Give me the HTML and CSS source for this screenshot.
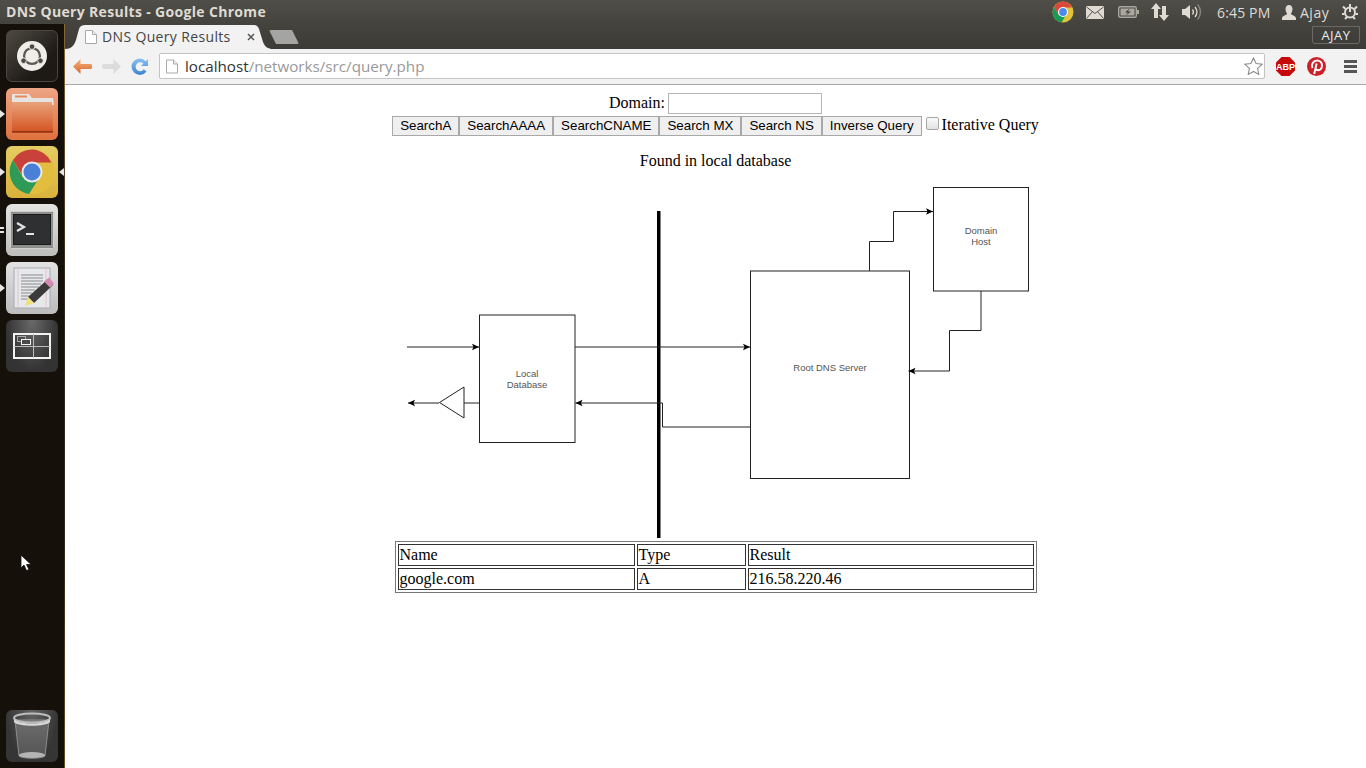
FILE: index.html
```html
<!DOCTYPE html>
<html lang="en">
<head>
<meta charset="utf-8">
<title>DNS Query Results</title>
<link rel="stylesheet" href="styles.css">
</head>
<body>
<div class="desktop">
  <header class="panel">
    <span class="panel-title">DNS Query Results - Google Chrome</span>
    <div class="tray">
      <svg class="tray-chrome" width="22" height="22" viewBox="0 0 22 22">
        <circle cx="11" cy="11" r="10.500" fill="#e2c13c"/>
        <path d="M11 .5A10.500 10.500 0 0 0 2 6l4.500 8L11 6.500h9A10.500 10.500 0 0 0 11 .5z" fill="#d9483b"/>
        <path d="M2 6A10.500 10.500 0 0 0 9.500 21.400l4.300-7.400-7.300 0z" fill="#0f9d58"/>
        <circle cx="11" cy="11" r="5" fill="#fff"/><circle cx="11" cy="11" r="3.900" fill="#4a8af0"/>
      </svg>
      <svg class="tray-mail" width="18" height="13" viewBox="0 0 18 13">
        <rect width="18" height="13" rx="1" fill="#dfdbd2"/>
        <path d="M.5 1 9 7.500 17.500 1M.5 12.500 6.500 5.500M17.500 12.500 11.500 5.500" fill="none" stroke="#55534d" stroke-width="1"/>
      </svg>
      <svg class="tray-batt" width="21" height="12" viewBox="0 0 21 12">
        <rect x=".7" y=".7" width="17.600" height="10.600" rx="1.500" fill="none" stroke="#aaa79f" stroke-width="1.400"/>
        <rect x="2.500" y="2.500" width="14" height="7" fill="#aaa79f"/>
        <rect x="19" y="4" width="2" height="4" fill="#aaa79f"/>
        <path d="M11.500 2.500 7 6.500h3L8 9.500l5-4h-3z" fill="#3f3e39"/>
      </svg>
      <svg class="tray-net" width="18" height="20" viewBox="0 0 18 20">
        <path d="M5 1 0 7h3v9h4V7h3zM13 19l5-6h-3V4h-4v9H8z" fill="#dfdbd2"/>
      </svg>
      <svg class="tray-vol" width="20" height="18" viewBox="0 0 20 18">
        <path d="M0 6h3l5-4v14l-5-4H0z" fill="#dfdbd2"/>
        <path d="M10.500 6.500a4 4 0 0 1 0 5M13 4a7.500 7.500 0 0 1 0 10" fill="none" stroke="#dfdbd2" stroke-width="1.300"/>
        <path d="M15.500 1.500a11 11 0 0 1 0 15" fill="none" stroke="#8b8983" stroke-width="1.300"/>
      </svg>
      <span class="tray-time">6:45 PM</span>
      <svg class="tray-user" width="14" height="15" viewBox="0 0 14 15">
        <path d="M7 0c2.200 0 3.500 1.700 3.500 4S9.300 8 9 9c1 1.500 5 1.800 5 4.500V15H0v-1.500C0 10.800 4 10.500 5 9 4.700 8 3.500 6.300 3.500 4S4.800 0 7 0z" fill="#dfdbd2"/>
      </svg>
      <span class="tray-name">Ajay</span>
      <svg class="tray-gear" width="16" height="16" viewBox="0 0 16 16">
        <circle cx="8" cy="8.500" r="5" fill="none" stroke="#dfdbd2" stroke-width="2"/>
        <path d="M8 0v8M1 2.500l2.500 2.500M15 2.500 12.500 5M0 10h2.500M16 10h-2.500M3 15l2-2M13 15l-2-2" stroke="#dfdbd2" stroke-width="2" fill="none"/>
      </svg>
    </div>
  </header>

  <div class="workspace">
    <aside class="launcher">
      <div class="tile tile-bfb">
        <svg width="30" height="30" viewBox="0 0 32 32">
          <circle cx="16" cy="16" r="16" fill="#efedea"/>
          <circle cx="16" cy="16" r="8.500" fill="none" stroke="#5b5750" stroke-width="2.400"/>
          <circle cx="16" cy="6" r="3" fill="#4a4640" stroke="#efedea"/>
          <circle cx="7" cy="21" r="3" fill="#4a4640" stroke="#efedea"/>
          <circle cx="25" cy="21" r="3" fill="#4a4640" stroke="#efedea"/>
        </svg>
      </div>
      <div class="tile tile-files">
        <span class="pip pip-left"></span>
        <svg width="46" height="42" viewBox="0 0 46 42">
          <defs><linearGradient id="folder" x1="0" y1="0" x2="0" y2="1"><stop offset="0" stop-color="#e8a27a"/><stop offset="1" stop-color="#d4511f"/></linearGradient></defs>
          <path d="M3 1h17l3 4h21l1 7H3z" fill="#e6e4e1"/>
          <rect x="6" y="2.500" width="12" height="2" fill="#e88a5c"/>
          <path d="M3 9h40l1 29a2 2 0 0 1-2 2H5a2 2 0 0 1-2-2z" fill="url(#folder)"/>
          <rect x="3" y="38" width="41" height="1.500" fill="#8e3413"/>
        </svg>
      </div>
      <div class="tile tile-chrome">
        <span class="pip pip-left"></span>
        <span class="pip pip-right"></span>
        <svg width="46" height="46" viewBox="0 0 46 46">
          <circle cx="23" cy="23" r="22.500" fill="#e3bd3e"/>
          <path d="M23 .5A22.500 22.500 0 0 0 4 11l9.500 16L23 13.500h19.500A22.500 22.500 0 0 0 23 .5z" fill="#c8413a"/>
          <path d="M4 11A22.500 22.500 0 0 0 20 45l9.500-15-16-2z" fill="#2e9a58"/>
          <circle cx="23" cy="23" r="10.500" fill="#e8e8ea"/>
          <circle cx="23" cy="23" r="8.500" fill="#4a80d8"/>
        </svg>
      </div>
      <div class="tile tile-term">
        <span class="pip pip-double"></span>
        <svg width="44" height="38" viewBox="0 0 44 38">
          <rect x=".5" y=".5" width="43" height="37" rx="1" fill="#8f908d" stroke="#d0d0ce"/>
          <rect x="3.500" y="3.500" width="37" height="30" fill="#2f3031" stroke="#191a1b"/>
          <path d="M7 12l7 4-7 4" fill="none" stroke="#e4e4e4" stroke-width="2.200"/>
          <rect x="16" y="22" width="8" height="2" fill="#e4e4e4"/>
        </svg>
      </div>
      <div class="tile tile-edit">
        <span class="pip pip-left"></span>
        <svg width="46" height="46" viewBox="0 0 46 46">
          <rect x="5" y="3" width="36" height="40" fill="#e6e8ec" stroke="#a8aaad"/>
          <path d="M9 3v40M37 3v40" stroke="#e0b8bc" stroke-width=".8"/>
          <path d="M12 10h22M12 13h22M12 16h22M12 19h20M12 22h18M12 25h14M12 28h11M12 31h9M12 34h7" stroke="#8a8a8a" stroke-width="1"/>
          <path d="M39 14l5 6-19 18-6-6z" fill="#3a3a3a"/>
          <path d="M40 12.500l5 6-4 4-6-6z" fill="#d48cb4"/>
          <path d="M19 32l6 6-9 3z" fill="#efe07c"/>
        </svg>
      </div>
      <div class="tile tile-switch">
        <svg width="38" height="26" viewBox="0 0 38 26">
          <rect x="1" y="1" width="36" height="24" fill="none" stroke="#f2f2f2" stroke-width="2"/>
          <path d="M1 13.500h36M20.500 1v24" stroke="#bcbcbc" stroke-width="1"/>
          <rect x="4.500" y="3.500" width="8" height="5" fill="none" stroke="#a8a8a8"/>
          <rect x="8.500" y="6.500" width="9" height="5" fill="#4a4a4a" stroke="#f2f2f2"/>
        </svg>
      </div>
      <div class="tile tile-trash">
        <svg width="38" height="48" viewBox="0 0 38 48">
          <defs><linearGradient id="bin" x1="0" y1="0" x2="0" y2="1"><stop offset="0" stop-color="#6c6c6c"/><stop offset="1" stop-color="#545454"/></linearGradient></defs>
          <path d="M2 8 6 44c3 3 23 3 26 0L36 8z" fill="url(#bin)" stroke="#8c8c8c"/>
          <ellipse cx="19" cy="43" rx="13" ry="3" fill="#b4b4b4"/>
          <ellipse cx="19" cy="6" rx="18" ry="4.500" fill="none" stroke="#bdbdbd" stroke-width="2"/>
          <path d="M1 7c4 6 32 6 36 0v3c-4 5-32 5-36 0z" fill="#d8d8d8"/>
        </svg>
      </div>
      <svg class="cursor" width="12" height="18" viewBox="0 0 12 18">
        <path d="M1 1v13l3-3 2.500 5.500 2.500-1L6.500 10.500H11z" fill="#fff" stroke="#111" stroke-width=".8"/>
      </svg>
    </aside>

    <div class="browser">
      <div class="tabstrip">
        <div class="tab">
          <svg class="page-icon" width="12" height="14" viewBox="0 0 12 14">
            <path d="M.5.500h7l4 4v9H.5z" fill="#fff" stroke="#a9a9a9"/><path d="M7.500.500v4h4" fill="#eee" stroke="#a9a9a9"/>
          </svg>
          <span class="tab-title">DNS Query Results</span>
          <svg class="tab-close" width="8" height="8" viewBox="0 0 8 8"><path d="M1 1l6 6M7 1 1 7" stroke="#555" stroke-width="1.500"/></svg>
        </div>
        <div class="newtab"></div>
        <div class="profile">AJAY</div>
      </div>
      <div class="toolbar">
        <svg class="nav-back" width="19" height="15" viewBox="0 0 19 15">
          <defs><linearGradient id="orng" x1="0" y1="0" x2="0" y2="1"><stop offset="0" stop-color="#f4b57f"/><stop offset="1" stop-color="#d9662a"/></linearGradient></defs>
          <path d="M7.500 0 0 7.500 7.500 15V10H17a2.500 2.500 0 0 0 0-5H7.500z" fill="url(#orng)"/>
        </svg>
        <svg class="nav-fwd" width="19" height="15" viewBox="0 0 19 15">
          <path d="M11.500 0 19 7.500 11.500 15V10H2a2.500 2.500 0 0 1 0-5h9.500z" fill="#dcdcdc"/>
        </svg>
        <svg class="nav-reload" width="17" height="17" viewBox="0 0 17 17">
          <defs><linearGradient id="blu" x1="0" y1="0" x2="0" y2="1"><stop offset="0" stop-color="#8cc0f2"/><stop offset="1" stop-color="#3d85d0"/></linearGradient></defs>
          <path d="M17 1v7h-7l2.400-2.400A4.500 4.500 0 1 0 12.800 11.300l2.700 2.100A8.200 8.200 0 1 1 14.800 3.200z" fill="url(#blu)"/>
        </svg>
        <div class="omnibox">
          <svg class="page-icon" width="12" height="15" viewBox="0 0 12 14">
            <path d="M.5.500h7l4 4v9H.5z" fill="#fff" stroke="#a9a9a9"/><path d="M7.500.500v4h4" fill="#eee" stroke="#a9a9a9"/>
          </svg>
          <span class="url"><span class="url-host">localhost</span>/networks/src/query.php</span>
          <svg class="star" width="19" height="18" viewBox="0 0 19 18">
            <path d="M9.500 1l2.600 5.600 6 .7-4.500 4.100 1.200 6-5.300-3-5.300 3 1.200-6L.9 7.300l6-.7z" fill="#fff" stroke="#8c8c8c" stroke-width="1.100"/>
          </svg>
        </div>
        <svg class="ext-abp" width="19" height="19" viewBox="0 0 19 19">
          <path d="M5.500 0h8L19 5.500v8L13.500 19h-8L0 13.500v-8z" fill="#c60a0a"/>
          <text class="abp-text" x="9.500" y="13">ABP</text>
        </svg>
        <svg class="ext-pin" width="19" height="19" viewBox="0 0 19 19">
          <circle cx="9.500" cy="9.500" r="9.500" fill="#cb2027"/>
          <path d="M5.500 11C3.800 7.500 6.300 3.500 10 3.500c3 0 5 2 5 4.800 0 3-1.800 5-3.900 5-1.100 0-1.900-.6-2.200-1.400M9.600 6.500 7.200 17" fill="none" stroke="#fff" stroke-width="2"/>
        </svg>
        <svg class="menu-icon" width="13" height="13" viewBox="0 0 13 13">
          <path d="M0 0h13v3H0zM0 5h13v3H0zM0 10h13v3H0z" fill="#555"/>
        </svg>
      </div>

      <main class="page">
        <form class="query-form">
          <div class="domain-line">
            <label class="domain-label" for="domain">Domain:</label>
            <input id="domain" class="domain-input" type="text">
          </div>
          <div class="button-line"><button type="button">SearchA</button><button type="button">SearchAAAA</button><button type="button">SearchCNAME</button><button type="button">Search MX</button><button type="button">Search NS</button><button type="button">Inverse Query</button><input id="iter" class="iter-check" type="checkbox"><label class="iter-label" for="iter">Iterative Query</label></div>
        </form>
        <p class="status">Found in local database</p>

        <svg class="diagram" width="660" height="355" viewBox="386 186 660 355">
          <defs>
            <marker id="head" markerUnits="userSpaceOnUse" markerWidth="8" markerHeight="8" refX="7" refY="4" orient="auto">
              <path d="M0 .8 7 4 0 7.200 1.500 4z" fill="#000"/>
            </marker>
          </defs>
          <g fill="#fff" stroke="#222" stroke-width="1">
            <rect x="479.500" y="315" width="95.500" height="127.500"/>
            <rect x="750.500" y="271" width="159" height="207.500"/>
            <rect x="933.500" y="187.500" width="95" height="103.500"/>
            <path d="M464 387v31l-24.500-15.500z"/>
          </g>
          <rect x="657" y="211" width="3.500" height="327" fill="#000"/>
          <g fill="none" stroke="#222" stroke-width="1">
            <path d="M407 347H479" marker-end="url(#head)"/>
            <path d="M575 347H750" marker-end="url(#head)"/>
            <path d="M750 427H662.500V403H575.500" marker-end="url(#head)"/>
            <path d="M479 403H464"/>
            <path d="M439 403H408" marker-end="url(#head)"/>
            <path d="M869.500 271V241.500H893.500V211.500H933" marker-end="url(#head)"/>
            <path d="M981 291V330.500H949.500V371H908.500" marker-end="url(#head)"/>
          </g>
          <g class="diagram-text">
            <text x="527" y="377">Local</text>
            <text x="527" y="388">Database</text>
            <text x="830" y="370.500">Root DNS Server</text>
            <text x="981" y="233.500">Domain</text>
            <text x="981" y="244.500">Host</text>
          </g>
        </svg>

        <table class="results">
          <tr><td class="col-name">Name</td><td class="col-type">Type</td><td class="col-result">Result</td></tr>
          <tr><td>google.com</td><td>A</td><td>216.58.220.46</td></tr>
        </table>
      </main>
    </div>
  </div>
</div>
</body>
</html>
```

FILE: styles.css
```css
* { box-sizing: border-box; }
html, body { margin: 0; padding: 0; height: 100%; overflow: hidden; }

.desktop {
  width: 1366px;
  height: 768px;
  display: flex;
  flex-direction: column;
  font-family: "Liberation Serif", serif;
  background: #fff;
}

/* top panel */
.panel {
  height: 24px;
  flex: none;
  display: flex;
  align-items: center;
  justify-content: space-between;
  background: linear-gradient(#504e49, #44433e);
  color: #dfdbd2;
  font-family: "Open Sans", sans-serif;
}
.panel-title { padding: 0 0 2px 6px; font-size: 14px; font-weight: 700; letter-spacing: .33px; white-space: nowrap; }
.tray { display: flex; align-items: center; font-size: 14px; }
.tray-chrome { margin-right: 12px; }
.tray-mail { margin-right: 14px; }
.tray-batt { margin-right: 12px; }
.tray-net { margin-right: 13px; }
.tray-vol { margin-right: 15px; }
.tray-time { margin-right: 12px; width: 53px; letter-spacing: .15px; white-space: nowrap; }
.tray-user { margin-right: 4px; }
.tray-name { width: 30px; margin-right: 12px; letter-spacing: .5px; }
.tray-gear { margin-right: 8px; }

.workspace { flex: 1; display: flex; min-height: 0; }

/* launcher */
.launcher {
  position: relative;
  width: 65px;
  flex: none;
  display: flex;
  flex-direction: column;
  align-items: flex-start;
  gap: 6px;
  padding: 6px 0 6px 6px;
  background: #15100a;
  border-right: 1px solid;
  border-image: linear-gradient(#8a6a35, #33261a 35%, #33261a 70%, #6a4d20) 1;
}
.tile {
  position: relative;
  width: 52px;
  height: 52px;
  flex: none;
  display: flex;
  align-items: center;
  justify-content: center;
  border-radius: 6px;
}
.tile-bfb { background: linear-gradient(135deg, #4e4a43, #1d1a15 70%); border: 1px solid #4a4640; }
.tile-files { background: linear-gradient(#eda583, #e0703f); }
.tile-chrome { background: linear-gradient(#e3cd62, #d9b23a); }
.tile-term { background: linear-gradient(#e4e4e2, #bdbdbb); }
.tile-edit { background: linear-gradient(#e2e2e2, #bcbcbc); }
.tile-switch { background: radial-gradient(ellipse at 50% 0, #6a6a6a, #333 70%); }
.tile-trash { margin-top: auto; background: radial-gradient(ellipse at 50% 0, #626262, #353535 70%); }
.pip {
  position: absolute;
  top: 50%;
  margin-top: -4px;
  width: 0;
  height: 0;
  border-top: 4px solid transparent;
  border-bottom: 4px solid transparent;
}
.pip-left { left: -6px; border-left: 5px solid #e6e6e6; }
.pip-right { right: -6px; border-right: 5px solid #e6e6e6; }
.pip-double {
  left: -6px;
  margin-top: -3px;
  width: 4px;
  height: 6px;
  border: 0;
  border-top: 2px solid #e6e6e6;
  border-bottom: 2px solid #e6e6e6;
}
.cursor { position: absolute; left: 20px; top: 530px; }

/* browser */
.browser { flex: 1; min-width: 0; display: flex; flex-direction: column; }
.tabstrip {
  height: 25px;
  flex: none;
  display: flex;
  align-items: flex-start;
  background: linear-gradient(#44433e, #3c3b37);
}
.tab {
  width: 208px;
  height: 25px;
  flex: none;
  display: flex;
  align-items: center;
  padding-left: 20px;
  background: #f2f2f2;
  color: #444;
  font-family: "Open Sans", sans-serif;
  font-size: 14px;
  clip-path: path("M0 25 C6 25 9 22 11 16 L14 5 C15 2 17 1 20 1 L188 1 C191 1 193 2 194 5 L198 18 C200 23 203 25 208 25 Z");
}
.tab-title { margin-left: 5px; width: 135px; letter-spacing: .35px; white-space: nowrap; }
.tab-close { margin-left: 10px; }
.newtab {
  width: 30px;
  height: 14px;
  margin: 6px 0 0 -4px;
  background: #a4a4a2;
  clip-path: polygon(0 0, 23px 0, 30px 14px, 7px 14px);
  border-radius: 2px;
}
.profile {
  margin: 2px 6px 0 auto;
  width: 48px;
  height: 18px;
  display: flex;
  align-items: center;
  justify-content: center;
  border: 1px solid #6a6963;
  border-radius: 0 0 3px 3px;
  color: #ececec;
  font-family: "Open Sans", sans-serif;
  font-size: 13px;
  letter-spacing: .5px;
}
.toolbar {
  height: 36px;
  flex: none;
  display: flex;
  align-items: center;
  padding-bottom: 1px;
  background: #f2f2f2;
  border-bottom: 1px solid #a9a9a9;
}
.nav-back { margin-left: 8px; }
.nav-fwd { margin-left: 10px; }
.nav-reload { margin-left: 10px; }
.omnibox {
  width: 1106px;
  height: 26px;
  margin-left: 11px;
  display: flex;
  align-items: center;
  padding-left: 6px;
  background: #fff;
  border: 1px solid #c4c4c4;
  border-radius: 2px;
}
.url {
  margin-left: 7px;
  color: #999;
  font-family: "Open Sans", sans-serif;
  font-size: 15.200px;
  white-space: nowrap;
}
.url-host { color: #333; }
.star { margin-left: auto; margin-right: 1px; }
.ext-abp { margin-left: 11px; }
.ext-pin { margin-left: 12px; }
.menu-icon { margin-left: 18px; }
.abp-text {
  fill: #fff;
  font-family: "Liberation Sans", sans-serif;
  font-size: 9px;
  font-weight: 700;
  text-anchor: middle;
}

/* page */
.page { flex: 1; min-height: 0; padding-top: 8px; text-align: center; color: #000; font-size: 16px; }
.domain-line { height: 21px; display: flex; justify-content: center; align-items: center; gap: 3px; }
.domain-label { margin-bottom: 2px; }
.domain-input {
  width: 154px;
  height: 21px;
  padding: 1px;
  border: 1px solid #b5b5b5;
  background: #fff;
}
.button-line { height: 20px; margin-top: 2px; display: flex; justify-content: center; align-items: center; }
.button-line button {
  height: 20px;
  padding: 0 7px 2px;
  border: 1px solid #a8a8a8;
  border-radius: 0;
  background: #efefef;
  color: #000;
  font-family: "Liberation Sans", sans-serif;
  font-size: 13.333px;
  white-space: nowrap;
}
.iter-check {
  appearance: none;
  width: 13px;
  height: 13px;
  margin: 0 3px 5px 4px;
  border: 1px solid #a6a6a6;
  border-radius: 2px;
  background: linear-gradient(#fafafa, #e2e2e2);
}
.iter-label { margin-bottom: 2px; }
.status { margin: 16px 0; height: 18px; line-height: 18px; }
.diagram { display: block; margin: 0 auto; }
.diagram-text text {
  fill: #555;
  font-family: "Liberation Sans", sans-serif;
  font-size: 9.500px;
  text-anchor: middle;
}
.results {
  width: 642px;
  margin: 0 auto;
  border: 1px solid #777;
  border-spacing: 2px;
  text-align: left;
}
.results td { height: 22px; padding: 1px; border: 1px solid #333; }
.col-name { width: 237px; }
.col-type { width: 109px; }
```
